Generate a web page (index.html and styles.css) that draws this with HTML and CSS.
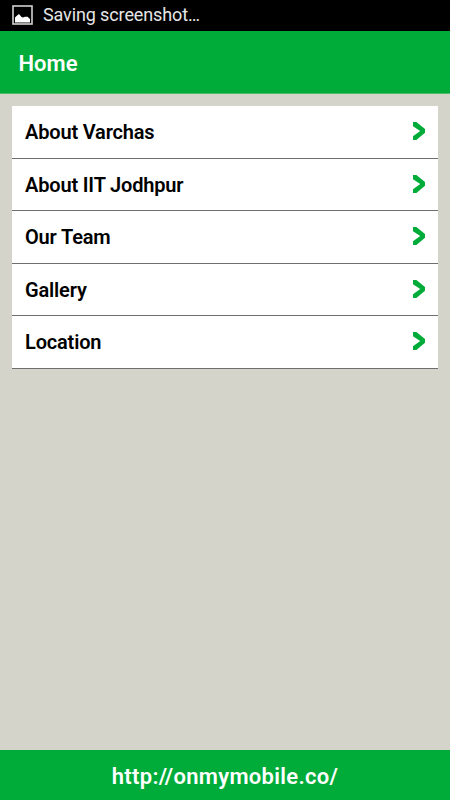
FILE: index.html
```html
<!DOCTYPE html>
<html lang="en">
<head>
    <meta charset="UTF-8">
    <meta name="viewport" content="width=device-width, initial-scale=1.0">
    <title>Home</title>
    <link rel="stylesheet" href="styles.css">
</head>
<body>
    <div class="status-bar">
        <svg class="status-icon" width="21" height="20" viewBox="0 0 21 20">
            <rect x="1" y="1" width="19" height="18" fill="none" stroke="#d2d2d2" stroke-width="1.6"/>
            <path d="M3 17.5V12.5L4.5 11L7 9L9.5 12L11 12.6L13 11.8L15.5 11.8L18 14V17.5Z" fill="#fff"/>
        </svg>
        <span class="status-text">Saving screenshot…</span>
    </div>

    <header class="header">
        <h1>Home</h1>
    </header>

    <main class="content">
        <ul class="menu">
            <li><a href="#"><span>About Varchas</span><svg class="arrow" viewBox="0 0 12 18"><path d="M0 0H3.4L12 7V10.8L3.4 18H0V14.2L7.2 9L0 4.2Z"/></svg></a></li>
            <li><a href="#"><span>About IIT Jodhpur</span><svg class="arrow" viewBox="0 0 12 18"><path d="M0 0H3.4L12 7V10.8L3.4 18H0V14.2L7.2 9L0 4.2Z"/></svg></a></li>
            <li><a href="#"><span>Our Team</span><svg class="arrow" viewBox="0 0 12 18"><path d="M0 0H3.4L12 7V10.8L3.4 18H0V14.2L7.2 9L0 4.2Z"/></svg></a></li>
            <li><a href="#"><span>Gallery</span><svg class="arrow" viewBox="0 0 12 18"><path d="M0 0H3.4L12 7V10.8L3.4 18H0V14.2L7.2 9L0 4.2Z"/></svg></a></li>
            <li><a href="#"><span>Location</span><svg class="arrow" viewBox="0 0 12 18"><path d="M0 0H3.4L12 7V10.8L3.4 18H0V14.2L7.2 9L0 4.2Z"/></svg></a></li>
        </ul>
    </main>

    <footer class="footer">
        <a href="#">http://onmymobile.co/</a>
    </footer>
</body>
</html>
```
FILE: styles.css
```css
* {
    box-sizing: border-box;
}

body {
    margin: 0;
    height: 100vh;
    display: flex;
    flex-direction: column;
    font-family: Roboto, sans-serif;
    background-color: #d4d4cb;
}

a {
    color: inherit;
    text-decoration: none;
}

.status-bar {
    height: 31px;
    display: flex;
    align-items: center;
    padding: 0 12px 1px;
    background-color: #000;
}

.status-text {
    margin-left: 10px;
    font-size: 18px;
    line-height: 30px;
    letter-spacing: -0.12px;
    color: #e6e6e6;
}

.header {
    height: 63px;
    display: flex;
    align-items: center;
    padding: 2px 18.5px 0;
    background-color: #00ac39;
    border-bottom: 1px solid #4fb966;
    color: #fff;
}

h1 {
    margin: 0;
    font-size: 22px;
    font-weight: 600;
}

.content {
    flex: 1;
    padding: 12px;
}

.menu {
    margin: 0;
    padding: 0;
    list-style: none;
    background-color: #fff;
}

.menu a {
    height: 52.5px;
    display: flex;
    justify-content: space-between;
    align-items: center;
    padding: 0 13px;
    border-bottom: 1px solid #6e6e6e;
    color: #000;
    font-size: 20px;
    font-weight: 600;
    letter-spacing: -0.17px;
}

.menu span {
    padding-top: 1px;
}

.arrow {
    width: 12px;
    height: 18px;
    margin-bottom: 1px;
    fill: #00ac39;
}

.footer {
    height: 50px;
    display: flex;
    justify-content: center;
    align-items: center;
    padding-top: 2px;
    background-color: #00ac39;
    color: #fff;
    font-size: 22px;
    font-weight: 600;
    letter-spacing: 0.3px;
}
```
